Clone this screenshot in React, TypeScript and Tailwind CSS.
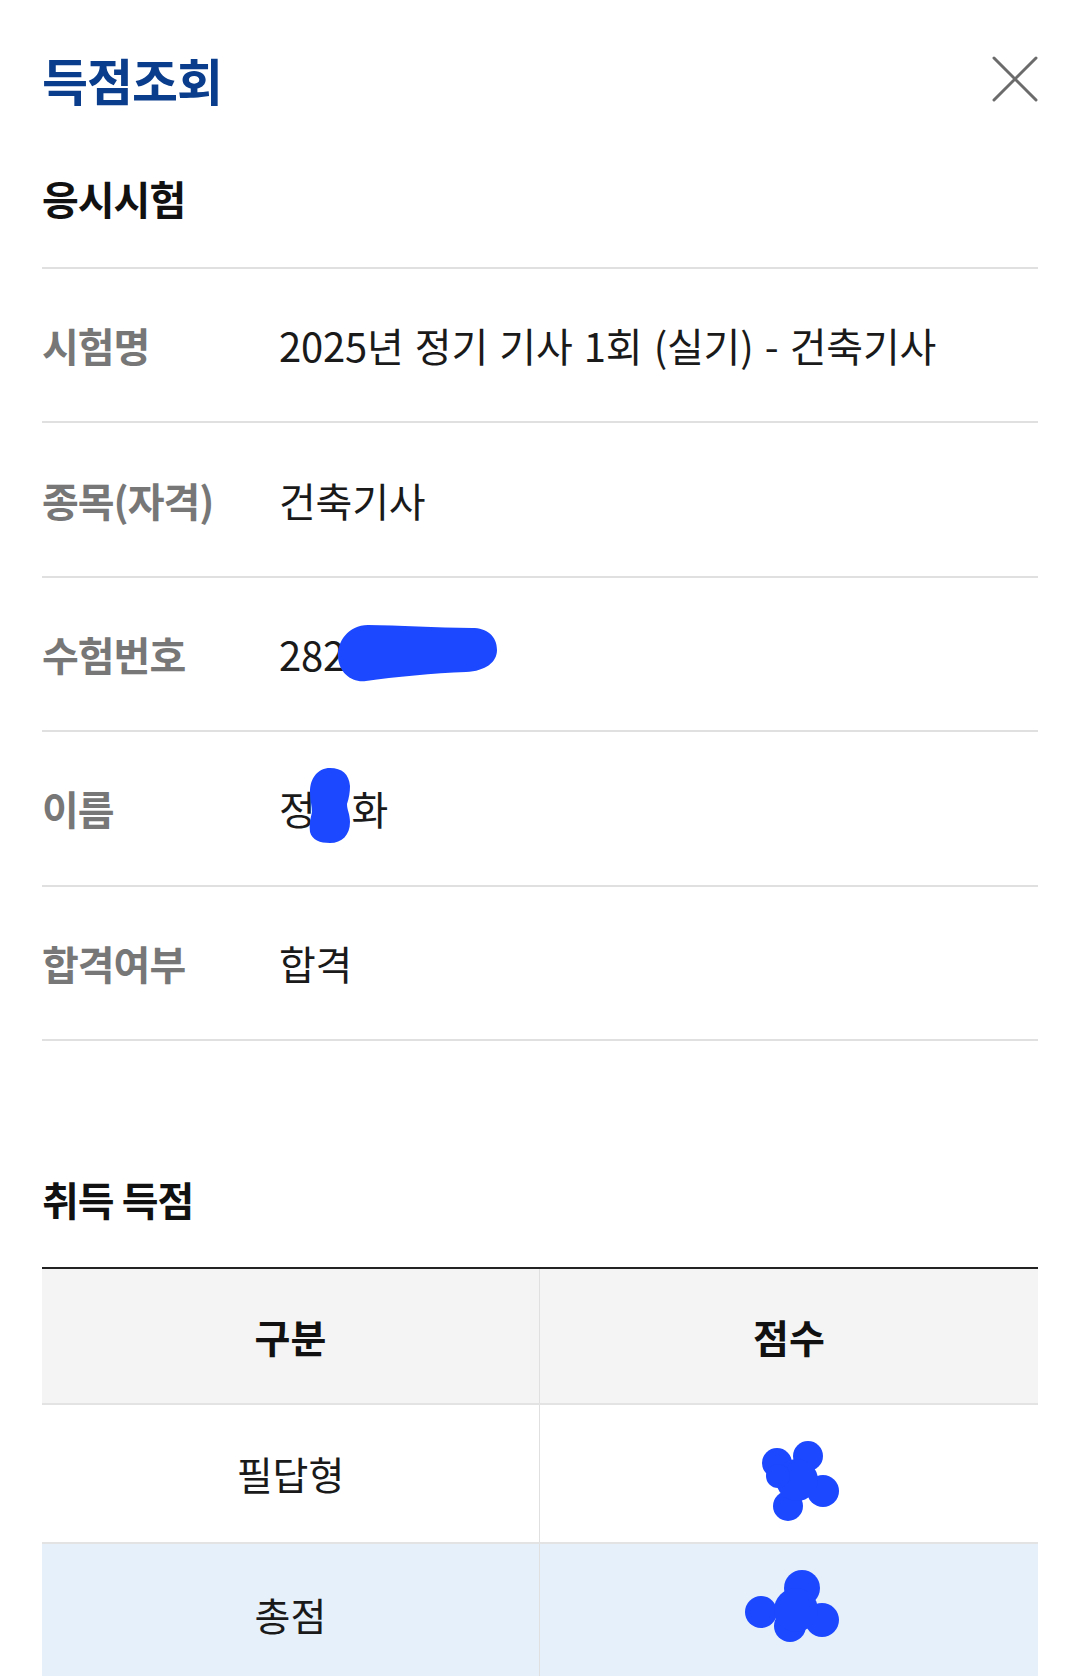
import React from "react";

const FONT = { fontFamily: '"Noto Sans CJK KR", "Noto Sans", sans-serif' };

function InfoRow({ label, children }: { label: string; children: React.ReactNode }) {
  return (
    <div className="flex h-[154.4px] items-center border-b-2 border-[#e0e0e0]">
      <div className="w-[237px] shrink-0 text-[40px] font-bold tracking-[-1px] text-[#777777]">{label}</div>
      <div className="text-[40px] font-normal tracking-[-0.2px] text-[#1a1a1a] [word-spacing:2.5px]">{children}</div>
    </div>
  );
}

export default function App() {
  return (
    <div className="relative min-h-[1676px] w-full overflow-hidden bg-white px-[42px]" style={FONT}>
      {/* Header */}
      <div className="flex h-[158px] items-center justify-between">
        <h1 className="text-[50px] font-bold tracking-[-1px] text-[#0a3d8c]">득점조회</h1>
        <button className="flex h-[46px] w-[46px] items-center justify-center" aria-label="닫기">
          <svg width="46" height="46" viewBox="0 0 46 46" fill="none">
            <path d="M2 2 L44 44 M44 2 L2 44" stroke="#6b6b6b" strokeWidth="3" strokeLinecap="round" />
          </svg>
        </button>
      </div>

      {/* 응시시험 */}
      <div className="flex h-[80px] items-center">
        <h2 className="text-[40px] font-bold tracking-[-1px] text-[#111111]">응시시험</h2>
      </div>
      <div className="mt-[29px] border-t-2 border-[#e0e0e0]">
        <InfoRow label="시험명">2025년 정기 기사 1회 (실기) - 건축기사</InfoRow>
        <InfoRow label="종목(자격)">건축기사</InfoRow>
        <InfoRow label="수험번호">282</InfoRow>
        <InfoRow label="이름">
          <span>정</span>
          <span className="inline-block w-[36px]"></span>
          <span>화</span>
        </InfoRow>
        <InfoRow label="합격여부">합격</InfoRow>
      </div>

      {/* 취득 득점 */}
      <div className="mt-[118px] flex h-[80px] items-center">
        <h2 className="text-[40px] font-bold tracking-[-1px] text-[#111111]">취득 득점</h2>
      </div>
      <div className="mt-[28px] border-t-2 border-[#222222]">
        <div className="grid h-[136px] grid-cols-2 border-b-2 border-[#e3e3e3] bg-[#f4f4f4]">
          <div className="flex items-center justify-center border-r border-[#e0e0e0] text-[39px] font-bold text-[#111111]">구분</div>
          <div className="flex items-center justify-center text-[39px] font-bold text-[#111111]">점수</div>
        </div>
        <div className="grid h-[139px] grid-cols-2 border-b-2 border-[#e3e3e3] bg-white">
          <div className="flex items-center justify-center border-r border-[#e0e0e0] text-[39px] text-[#1a1a1a]">필답형</div>
          <div className="flex items-center justify-center"></div>
        </div>
        <div className="grid h-[140px] grid-cols-2 bg-[#e6f0fa]">
          <div className="flex items-center justify-center border-r border-[#e0e0e0] text-[39px] text-[#1a1a1a]">총점</div>
          <div className="flex items-center justify-center"></div>
        </div>
      </div>

      {/* Redaction marks drawn over the content */}
      <svg
        className="pointer-events-none absolute left-0 top-0"
        width="1080"
        height="1676"
        viewBox="0 0 1080 1676"
        fill="#1c48ff"
      >
        <path d="M368 625 C348 625 337 642 338 657 C339 673 352 683 366 681 C394 677 434 673 466 672 C486 671 497 662 497 650 C497 636 487 628 472 628 C436 628 398 625 368 625 Z" />
        <path d="M330 768 C318 768 310 778 310 792 C310 800 312 806 312 812 C310 820 309 826 310 832 C312 840 320 843 330 843 C342 843 350 835 350 822 C350 814 347 810 347 804 C349 798 350 792 350 786 C349 774 342 768 330 768 Z" />
        <circle cx="777" cy="1463" r="15" />
        <circle cx="808" cy="1456" r="15" />
        <circle cx="823" cy="1491" r="16" />
        <circle cx="788" cy="1506" r="15" />
        <circle cx="797" cy="1480" r="21" />
        <circle cx="778" cy="1476" r="12" />
        <circle cx="802" cy="1588" r="18" />
        <circle cx="761" cy="1612" r="16" />
        <circle cx="790" cy="1626" r="16" />
        <circle cx="822" cy="1620" r="17" />
        <circle cx="796" cy="1610" r="22" />
      </svg>
    </div>
  );
}
